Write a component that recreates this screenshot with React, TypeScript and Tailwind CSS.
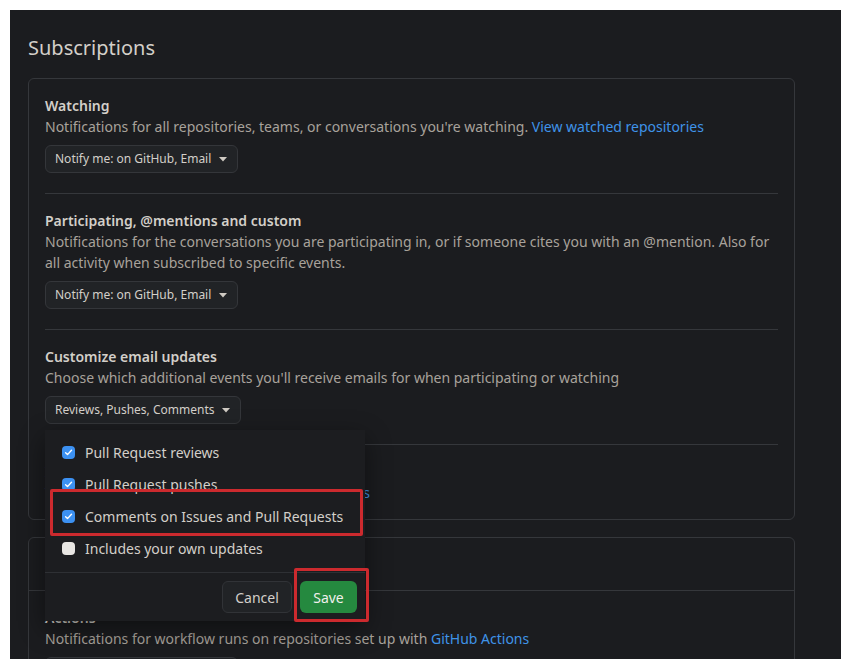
import { useState } from "react";

const font = { fontFamily: '"Noto Sans", "Open Sans", sans-serif' };

function Caret() {
  return (
    <svg width="8" height="5" viewBox="0 0 8 5" className="ml-2 mt-[1px]">
      <path d="M0 0h8L4 4.5z" fill="#cfcac3" />
    </svg>
  );
}

function SelectButton({ label }: { label: string }) {
  return (
    <button className="flex h-[28px] items-center rounded-md border border-[#34363a] bg-[#212326] pl-[9px] pr-[10px] text-[12px] text-[#d3cfc9]">
      {label}
      <Caret />
    </button>
  );
}

function Check({ on }: { on: boolean }) {
  if (!on) return <span className="h-[13px] w-[13px] rounded-[4px] bg-[#e8e6e3]" />;
  return (
    <span className="flex h-[13px] w-[13px] items-center justify-center rounded-[4px] bg-[#3c91f2]">
      <svg width="9" height="9" viewBox="0 0 9 9">
        <path d="M1.6 4.7l1.9 1.9 4-4.4" fill="none" stroke="#fff" strokeWidth="1.4" strokeLinecap="round" strokeLinejoin="round" />
      </svg>
    </span>
  );
}

type Option = { id: string; label: string };

const options: Option[] = [
  { id: "reviews", label: "Pull Request reviews" },
  { id: "pushes", label: "Pull Request pushes" },
  { id: "comments", label: "Comments on Issues and Pull Requests" },
  { id: "own", label: "Includes your own updates" },
];

function EmailMenu() {
  const [checked, setChecked] = useState<string[]>(["reviews", "pushes", "comments"]);
  const toggle = (id: string) =>
    setChecked((prev) => (prev.includes(id) ? prev.filter((x) => x !== id) : [...prev, id]));

  return (
    <div className="absolute left-0 top-[34px] z-10 w-[320px] bg-[#1c1d20] shadow-[0_8px_24px_rgba(0,0,0,0.45)]">
      <div className="pb-2 pt-1.5">
        {options.map((o) => (
          <div
            key={o.id}
            onClick={() => toggle(o.id)}
            className="flex h-[32px] cursor-pointer items-center gap-[10px] pl-[17px] text-[14px] text-[#d3cfc9]"
          >
            <Check on={checked.includes(o.id)} />
            <span>{o.label}</span>
          </div>
        ))}
      </div>
      <div className="flex justify-end gap-2 border-t border-[#2e3034] px-2 pb-2 pt-2">
        <button className="h-[32px] w-[70px] rounded-md border border-[#313337] bg-[#212326] text-[14px] text-[#d3cfc9]">
          Cancel
        </button>
        <button className="h-[32px] w-[57px] rounded-md bg-[#25893f] text-[14px] text-[#f1efec]">Save</button>
      </div>

      {/* annotation boxes */}
      <div className="pointer-events-none absolute left-[5px] top-[59px] h-[47px] w-[313px] rounded-[2px] border-[3px] border-[#cc2a2e]" />
      <div className="pointer-events-none absolute left-[249px] top-[138px] h-[54px] w-[75px] rounded-[2px] border-[3px] border-[#cc2a2e]" />
    </div>
  );
}

function Section({
  title,
  children,
  last,
}: {
  title: string;
  children: React.ReactNode;
  last?: boolean;
}) {
  return (
    <div className={`pt-4 ${last ? "pb-4" : "border-b border-[#35373b] pb-5"}`}>
      <h3 className="text-[14px] font-semibold leading-[21px] text-[#d3cfc9]">{title}</h3>
      {children}
    </div>
  );
}

export default function App() {
  return (
    <div className="bg-white p-[10px]" style={font}>
      <div className="h-[649px] overflow-hidden bg-[#1b1c1f] px-[18px] pt-[23px]">
        <h2 className="mb-[15px] text-[20px] leading-[30px] text-[#d3cfc9]">Subscriptions</h2>

        <div className="mr-[28px] rounded-md border border-[#35373b] px-4">
          <Section title="Watching">
            <p className="text-[14px] leading-[21px] text-[#a8a29b]">
              Notifications for all repositories, teams, or conversations you're watching.{" "}
              <a className="text-[#3f93e8]">View watched repositories</a>
            </p>
            <div className="mt-2">
              <SelectButton label="Notify me: on GitHub, Email" />
            </div>
          </Section>

          <Section title="Participating, @mentions and custom">
            <p className="text-[14px] leading-[21px] text-[#a8a29b]">
              Notifications for the conversations you are participating in, or if someone cites you with an
              @mention. Also for all activity when subscribed to specific events.
            </p>
            <div className="mt-2">
              <SelectButton label="Notify me: on GitHub, Email" />
            </div>
          </Section>

          <Section title="Customize email updates">
            <p className="text-[14px] leading-[21px] text-[#a8a29b]">
              Choose which additional events you'll receive emails for when participating or watching
            </p>
            <div className="relative mt-2">
              <SelectButton label="Reviews, Pushes, Comments" />
              <EmailMenu />
            </div>
          </Section>

          <Section title="Ignored repositories" last>
            <p className="text-[14px] leading-[21px] text-[#a8a29b]">
              You'll never be notified. <a className="text-[#3f93e8]">View ignored repositories</a>
            </p>
          </Section>
        </div>

        <div className="mr-[28px] mt-[17px] rounded-md border border-[#35373b]">
          <div className="flex h-[53px] items-center border-b border-[#35373b] px-4">
            <h3 className="text-[14px] font-semibold text-[#d3cfc9]">System</h3>
          </div>
          <div className="px-4 pt-4">
            <h3 className="text-[14px] font-semibold leading-[21px] text-[#d3cfc9]">Actions</h3>
            <p className="text-[14px] leading-[21px] text-[#a8a29b]">
              Notifications for workflow runs on repositories set up with{" "}
              <a className="text-[#3f93e8]">GitHub Actions</a>
            </p>
            <div className="mt-2">
              <SelectButton label="Notify me: on GitHub, Email" />
            </div>
          </div>
        </div>
      </div>
    </div>
  );
}
